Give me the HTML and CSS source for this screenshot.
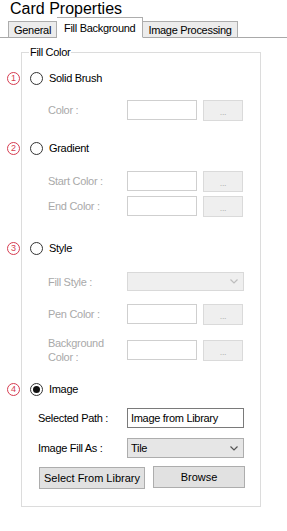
FILE: index.html
```html
<!DOCTYPE html>
<html lang="en">
<head>
    <meta charset="UTF-8"/>
    <title>Card Properties</title>
    <link rel="stylesheet" href="styles.css">
</head>
<body>
    <h1 class="title">Card Properties</h1>
    <nav class="tabs">
        <span class="tab">General</span>
        <span class="tab tab-active">Fill Background</span>
        <span class="tab">Image Processing</span>
    </nav>
    <fieldset class="group">
        <legend>Fill Color</legend>

        <div class="option option-1">
            <span class="badge">1</span>
            <span class="radio"></span>
            <span class="option-label">Solid Brush</span>
        </div>
        <div class="field field-disabled row-color">
            <span class="field-label">Color :</span>
            <span class="textbox"></span>
            <span class="dots">...</span>
        </div>

        <div class="option option-2">
            <span class="badge">2</span>
            <span class="radio"></span>
            <span class="option-label">Gradient</span>
        </div>
        <div class="field field-disabled row-start">
            <span class="field-label">Start Color :</span>
            <span class="textbox"></span>
            <span class="dots">...</span>
        </div>
        <div class="field field-disabled row-end">
            <span class="field-label">End Color :</span>
            <span class="textbox"></span>
            <span class="dots">...</span>
        </div>

        <div class="option option-3">
            <span class="badge">3</span>
            <span class="radio"></span>
            <span class="option-label">Style</span>
        </div>
        <div class="field field-disabled row-fill-style">
            <span class="field-label">Fill Style :</span>
            <span class="combo"><span class="combo-text"></span><svg class="chevron" width="8" height="5" viewBox="0 0 8 5"><path d="M0.5 0.5 L4 4 L7.5 0.5" fill="none" stroke="currentColor" stroke-width="1.2"/></svg></span>
        </div>
        <div class="field field-disabled row-pen">
            <span class="field-label">Pen Color :</span>
            <span class="textbox"></span>
            <span class="dots">...</span>
        </div>
        <div class="field field-disabled row-background">
            <span class="field-label">Background<br>Color :</span>
            <span class="textbox"></span>
            <span class="dots">...</span>
        </div>

        <div class="option option-4">
            <span class="badge">4</span>
            <span class="radio radio-checked"></span>
            <span class="option-label">Image</span>
        </div>
        <div class="field field-enabled row-path">
            <span class="field-label">Selected Path :</span>
            <span class="textbox textbox-wide">Image from Library</span>
        </div>
        <div class="field field-enabled row-fill-as">
            <span class="field-label">Image Fill As :</span>
            <span class="combo"><span class="combo-text">Tile</span><svg class="chevron" width="8" height="5" viewBox="0 0 8 5"><path d="M0.5 0.5 L4 4 L7.5 0.5" fill="none" stroke="currentColor" stroke-width="1.2"/></svg></span>
        </div>
        <div class="actions">
            <button class="btn btn-library">Select From Library</button>
            <button class="btn btn-browse">Browse</button>
        </div>
    </fieldset>
</body>
</html>
```

FILE: styles.css
```css
body {
    margin: 0;
    width: 287px;
    height: 531px;
    background-color: #fff;
    color: #000;
    font-family: 'Liberation Sans', Arial, sans-serif;
    font-size: 11px;
    letter-spacing: -.3px;
}

.title {
    margin: 0;
    padding-left: 10px;
    font-size: 16px;
    font-weight: normal;
    line-height: 17px;
    letter-spacing: 0;
}

.tabs {
    display: flex;
    align-items: flex-end;
    height: 20px;
    padding-left: 8px;
    border-bottom: 1px solid #a9a9a9;
}

.tab {
    box-sizing: border-box;
    display: flex;
    align-items: center;
    height: 17px;
    margin-bottom: -1px;
    padding: 0 5px;
    background-color: #ececec;
    border: 1px solid #adadad;
    border-bottom-color: #a9a9a9;
}

.tab + .tab {
    border-left: none;
}

.tab-active {
    height: 21px;
    padding: 0 7px;
    background-color: #fff;
    border: 1px solid #adadad;
    border-bottom-color: #fff;
}

.tab-active + .tab {
    border-left: none;
}

.group {
    box-sizing: border-box;
    width: 240px;
    margin: 8px 0 0 21px;
    padding: 0 0 17px 0;
    border: 1px solid #dcdcdc;
    display: flex;
    flex-direction: column;
}

.group legend {
    margin-left: 7px;
    padding: 0 1px;
    line-height: 12px;
}

.option {
    display: flex;
    align-items: center;
    height: 16px;
    margin-left: -15px;
}

.badge {
    box-sizing: border-box;
    display: flex;
    align-items: center;
    justify-content: center;
    width: 13px;
    height: 13px;
    border: 1px solid #d63c50;
    border-radius: 50%;
    color: #d63c50;
    font-size: 9px;
    letter-spacing: 0;
}

.radio {
    box-sizing: border-box;
    display: flex;
    align-items: center;
    justify-content: center;
    width: 13px;
    height: 13px;
    margin-left: 10px;
    border: 1px solid #333;
    border-radius: 50%;
    background-color: #fff;
}

.radio-checked::after {
    content: '';
    width: 7px;
    height: 7px;
    border-radius: 50%;
    background-color: #111;
}

.option-label {
    margin-left: 6px;
}

.option-1 { margin-top: 12px; }
.option-2 { margin-top: 20px; }
.option-3 { margin-top: 24px; }
.option-4 { margin-top: 21px; }

.field {
    display: flex;
    align-items: center;
    height: 20px;
}

.field-disabled {
    padding-left: 26px;
    color: #a9a9a9;
}

.field-disabled .field-label {
    width: 79px;
}

.field-enabled {
    padding-left: 16px;
}

.field-enabled .field-label {
    width: 89px;
}

.field-label {
    flex: none;
    line-height: 14px;
}

.row-color { margin-top: 14px; }
.row-start { margin-top: 15px; }
.row-end { margin-top: 5px; }
.row-fill-style { margin-top: 16px; height: 19px; }
.row-pen { margin-top: 13px; }
.row-background { margin-top: 16px; }
.row-path { margin-top: 11px; }
.row-fill-as { margin-top: 10px; }

.textbox {
    box-sizing: border-box;
    display: flex;
    align-items: center;
    width: 70px;
    height: 100%;
    padding-left: 3px;
    background-color: #fff;
    border: 1px solid #cfcfcf;
}

.textbox-wide {
    width: 117px;
    border-color: #7a7a7a;
}

.dots {
    box-sizing: border-box;
    display: flex;
    align-items: flex-end;
    justify-content: center;
    width: 40px;
    height: 21px;
    margin-left: 6px;
    padding-bottom: 3px;
    background-color: #efefef;
    border: 1px solid #dadada;
    color: #b4b4b4;
    font-size: 9px;
}

.combo {
    box-sizing: border-box;
    display: flex;
    align-items: center;
    justify-content: space-between;
    width: 117px;
    height: 100%;
    padding: 0 5px 0 3px;
    background-color: #efefef;
    border: 1px solid #d9d9d9;
    color: #bdbdbd;
}

.field-enabled .combo {
    background-color: #e6e6e6;
    border-color: #adadad;
    color: #000;
}

.field-enabled .chevron {
    color: #555;
}

.actions {
    display: flex;
    gap: 8px;
    margin-top: 9px;
    padding-left: 17px;
}

.btn {
    box-sizing: border-box;
    height: 22px;
    padding: 0;
    background-color: #e1e1e1;
    border: 1px solid #adadad;
    font: inherit;
    color: #000;
}

.btn-library {
    width: 106px;
}

.btn-browse {
    width: 92px;
    margin-top: -1px;
}
```
